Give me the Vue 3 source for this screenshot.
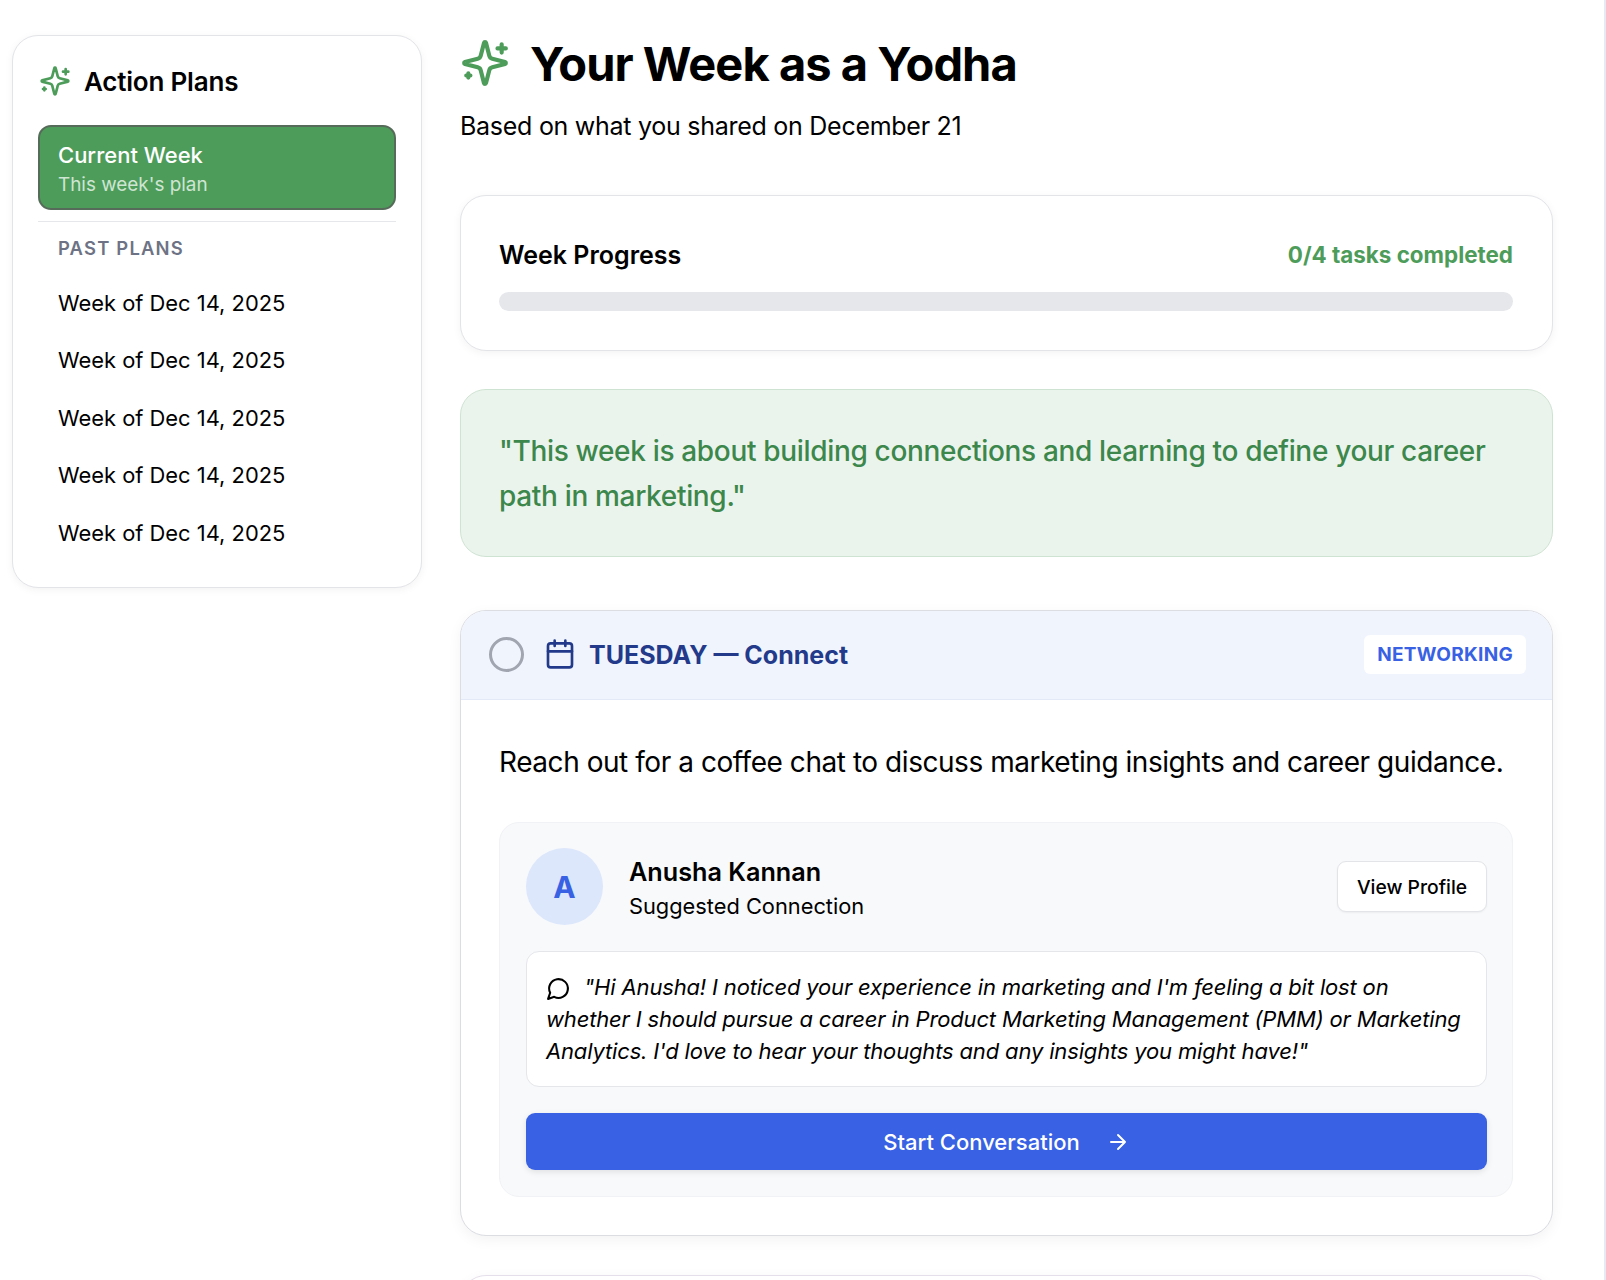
<template>
  <div class="page">
    <aside class="sidebar">
      <div class="side-head">
        <svg class="side-spark" viewBox="0 0 24 24">
          <path d="M9.937 15.5A2 2 0 0 0 8.5 14.063l-6.135-1.582a.5.5 0 0 1 0-.962L8.5 9.936A2 2 0 0 0 9.937 8.5l1.582-6.135a.5.5 0 0 1 .963 0L14.063 8.5A2 2 0 0 0 15.5 9.937l6.135 1.581a.5.5 0 0 1 0 .964L15.5 14.063a2 2 0 0 0-1.437 1.437l-1.582 6.135a.5.5 0 0 1-.963 0z" />
          <path d="M20 3v4M22 5h-4M4 17v2M5 18H3" />
        </svg>
        <h2>Action Plans</h2>
      </div>

      <button class="current">
        <span class="current-title">Current Week</span>
        <span class="current-sub">This week's plan</span>
      </button>

      <div class="past">
        <div class="past-label">PAST PLANS</div>
        <div v-for="(plan, i) in pastPlans" :key="i" class="past-item">{{ plan }}</div>
      </div>
    </aside>

    <main class="main">
      <header class="head">
        <div class="title-row">
          <svg class="title-spark" viewBox="0 0 24 24">
            <path d="M9.937 15.5A2 2 0 0 0 8.5 14.063l-6.135-1.582a.5.5 0 0 1 0-.962L8.5 9.936A2 2 0 0 0 9.937 8.5l1.582-6.135a.5.5 0 0 1 .963 0L14.063 8.5A2 2 0 0 0 15.5 9.937l6.135 1.581a.5.5 0 0 1 0 .964L15.5 14.063a2 2 0 0 0-1.437 1.437l-1.582 6.135a.5.5 0 0 1-.963 0z" />
            <path d="M20 3v4M22 5h-4M4 17v2M5 18H3" />
          </svg>
          <h1>Your Week as a Yodha</h1>
        </div>
        <p class="based">Based on what you shared on December 21</p>
      </header>

      <section class="progress">
        <div class="progress-top">
          <h3>Week Progress</h3>
          <span class="count">0/4 tasks completed</span>
        </div>
        <div class="bar"></div>
      </section>

      <section class="quote">
        "This week is about building connections and learning to define your career path in marketing."
      </section>

      <section class="task">
        <div class="task-head">
          <span class="circle"></span>
          <svg class="cal" viewBox="0 0 24 24">
            <path d="M8 2v4M16 2v4M3 10h18" />
            <rect x="3" y="4" width="18" height="18" rx="2" />
          </svg>
          <span class="day">TUESDAY — Connect</span>
          <span class="tag">NETWORKING</span>
        </div>

        <div class="task-body">
          <p class="task-text">Reach out for a coffee chat to discuss marketing insights and career guidance.</p>

          <div class="contact">
            <div class="person">
              <div class="avatar">A</div>
              <div class="who">
                <div class="name">Anusha Kannan</div>
                <div class="role">Suggested Connection</div>
              </div>
              <button class="view">View Profile</button>
            </div>

            <div class="message">
              <svg class="bubble" viewBox="0 0 24 24">
                <path d="M7.9 20A9 9 0 1 0 4 16.1L2 22Z" />
              </svg>
              "Hi Anusha! I noticed your experience in marketing and I'm feeling a bit lost on whether I should pursue a career in Product Marketing Management (PMM) or Marketing Analytics. I'd love to hear your thoughts and any insights you might have!"
            </div>

            <button class="start">
              Start Conversation
              <svg class="arrow" viewBox="0 0 24 24">
                <path d="M5 12h14M12 5l7 7-7 7" />
              </svg>
            </button>
          </div>
        </div>
      </section>

      <section class="task next"></section>
    </main>
  </div>
</template>

<script setup>
const pastPlans = [
  "Week of Dec 14, 2025",
  "Week of Dec 14, 2025",
  "Week of Dec 14, 2025",
  "Week of Dec 14, 2025",
  "Week of Dec 14, 2025",
]
</script>

<style>
html, body {
  margin: 0;
  height: 1280px;
  overflow: hidden;
  background: #fff;
}
</style>

<style scoped>
* {
  box-sizing: border-box;
}

.page {
  display: flex;
  align-items: flex-start;
  gap: 38px;
  height: 1280px;
  overflow: hidden;
  padding: 35px 51px 0 12px;
  border-right: 2px solid #e6eaf5;
  font-family: Inter, "Liberation Sans", sans-serif;
  color: #000;
}

/* sidebar */
.sidebar {
  width: 410px;
  flex: none;
  height: 553px;
  padding: 26px 25px 0;
  background: #fff;
  border: 1px solid #e3e4e8;
  border-radius: 26px;
  box-shadow: 0 2px 8px rgba(0, 0, 0, .05);
}

.side-head {
  display: flex;
  align-items: center;
  gap: 13px;
  height: 38px;
  margin: 0 0 25px 1px;
}

.side-head h2 {
  margin: 0;
  font-size: 26px;
  font-weight: 600;
  letter-spacing: -.2px;
}

.side-spark {
  width: 32px;
  height: 32px;
  fill: none;
  stroke: #4d9c5a;
  stroke-width: 2;
  stroke-linecap: round;
  stroke-linejoin: round;
}

.current {
  display: flex;
  flex-direction: column;
  width: 100%;
  height: 85px;
  padding: 14px 18px 0;
  background: #4d9c5a;
  border: 2px solid #566b59;
  border-radius: 13px;
  color: #fff;
  font-family: inherit;
  text-align: left;
}

.current-title {
  font-size: 22px;
  font-weight: 500;
  line-height: 28px;
}

.current-sub {
  margin-top: 3px;
  font-size: 18.9px;
  line-height: 26px;
  color: #cfe5d3;
}

.past {
  margin-top: 11px;
  border-top: 1px solid #e6e7eb;
  padding-top: 15px;
}

.past-label {
  padding-left: 20px;
  font-size: 18.4px;
  line-height: 22px;
  font-weight: 600;
  letter-spacing: 1.2px;
  color: #6d7385;
  margin-bottom: 16px;
}

.past-item {
  padding-left: 20px;
  height: 57.4px;
  font-size: 21.9px;
  line-height: 57.4px;
}

/* main column */
.main {
  width: 1093px;
  flex: none;
}

.title-row {
  display: flex;
  align-items: center;
  gap: 20px;
  height: 58px;
}

.title-spark {
  width: 50px;
  height: 50px;
  flex: none;
  margin-bottom: 2px;
  fill: none;
  stroke: #4d9c5a;
  stroke-width: 2;
  stroke-linecap: round;
  stroke-linejoin: round;
}

h1 {
  margin: 0;
  font-size: 47px;
  font-weight: 700;
  letter-spacing: -.95px;
  line-height: 56px;
}

.based {
  margin: 17px 0 0;
  font-size: 25px;
  letter-spacing: -.27px;
  line-height: 32px;
}

.progress {
  margin-top: 53px;
  height: 156px;
  padding: 42px 39px 0 38px;
  background: #fff;
  border: 1px solid #e3e4e8;
  border-radius: 26px;
  box-shadow: 0 2px 8px rgba(0, 0, 0, .05);
}

.progress-top {
  display: flex;
  justify-content: space-between;
  align-items: center;
  height: 34px;
}

.progress-top h3 {
  margin: 0;
  font-size: 25px;
  font-weight: 600;
}

.count {
  margin-bottom: 2px;
  font-size: 22.4px;
  font-weight: 700;
  color: #4d9c5a;
}

.bar {
  margin-top: 20px;
  height: 19px;
  background: #e5e7eb;
  border-radius: 10px;
}

.quote {
  margin-top: 38px;
  height: 168px;
  padding: 39px 39px 0 38px;
  background: #ebf4ec;
  border: 1px solid #cfe3d3;
  border-radius: 26px;
  font-size: 28px;
  font-weight: 500;
  letter-spacing: -.33px;
  line-height: 45px;
  color: #3c874b;
}

/* task card */
.task {
  margin-top: 53px;
  height: 626px;
  background: #fff;
  border: 1px solid #dcdde3;
  border-radius: 26px;
  overflow: hidden;
  box-shadow: 0 4px 14px rgba(0, 0, 0, .05);
}

.task-head {
  display: flex;
  align-items: center;
  height: 89px;
  padding: 0 26px 2px 28px;
  background: #eff4fd;
  border-bottom: 1px solid #e3e9f6;
}

.circle {
  width: 35px;
  height: 35px;
  flex: none;
  border: 3px solid #a0a5b0;
  border-radius: 50%;
}

.cal {
  width: 32px;
  height: 32px;
  margin-left: 20px;
  flex: none;
  fill: none;
  stroke: #233a8b;
  stroke-width: 2;
  stroke-linecap: round;
  stroke-linejoin: round;
}

.day {
  margin-left: 13px;
  padding-top: 2px;
  font-size: 25px;
  font-weight: 700;
  color: #233a8b;
}

.tag {
  margin-left: auto;
  height: 39px;
  padding: 0 13px;
  background: #fff;
  border-radius: 6px;
  font-size: 19px;
  font-weight: 700;
  line-height: 39px;
  letter-spacing: .3px;
  color: #3861e3;
}

.task-body {
  padding: 0 39px 0 38px;
}

.task-text {
  margin: 42px 0 0;
  font-size: 28px;
  letter-spacing: -.45px;
  line-height: 40px;
}

.contact {
  margin-top: 40px;
  height: 375px;
  padding: 25px 25px 26px 26px;
  background: #f8f9fb;
  border: 1px solid #f1f2f5;
  border-radius: 20px;
}

.person {
  display: flex;
  align-items: center;
  height: 77px;
}

.avatar {
  width: 77px;
  height: 77px;
  flex: none;
  display: flex;
  align-items: center;
  justify-content: center;
  background: #dce7fb;
  border-radius: 50%;
  font-size: 30px;
  font-weight: 700;
  color: #3861e3;
}

.who {
  margin-left: 26px;
  padding-top: 2px;
}

.name {
  font-size: 25.2px;
  font-weight: 600;
  line-height: 36px;
}

.role {
  font-size: 21.8px;
  line-height: 32px;
}

.view {
  margin-left: auto;
  width: 150px;
  height: 51px;
  background: #fff;
  border: 1px solid #e3e4e8;
  border-radius: 9px;
  font-family: inherit;
  font-size: 19.3px;
  font-weight: 500;
  color: #000;
  box-shadow: 0 1px 2px rgba(0, 0, 0, .05);
}

.message {
  margin-top: 26px;
  height: 136px;
  padding: 19px 19px 0;
  background: #fff;
  border: 1px solid #e5e6ea;
  border-radius: 13px;
  font-size: 22px;
  letter-spacing: -.16px;
  font-style: italic;
  line-height: 32px;
}

.bubble {
  width: 25px;
  height: 25px;
  margin-right: 7px;
  vertical-align: -6px;
  fill: none;
  stroke: #000;
  stroke-width: 2;
  stroke-linecap: round;
  stroke-linejoin: round;
}

.start {
  display: flex;
  align-items: center;
  justify-content: center;
  gap: 26px;
  width: 100%;
  height: 57px;
  margin-top: 26px;
  background: #3861e3;
  border: none;
  border-radius: 9px;
  color: #fff;
  font-family: inherit;
  font-size: 22px;
  font-weight: 500;
  box-shadow: 0 2px 6px rgba(0, 0, 0, .1);
}

.arrow {
  width: 24px;
  height: 24px;
  fill: none;
  stroke: #fff;
  stroke-width: 2;
  stroke-linecap: round;
  stroke-linejoin: round;
}

.next {
  margin-top: 39px;
  border-color: #e5dfeb;
}
</style>
